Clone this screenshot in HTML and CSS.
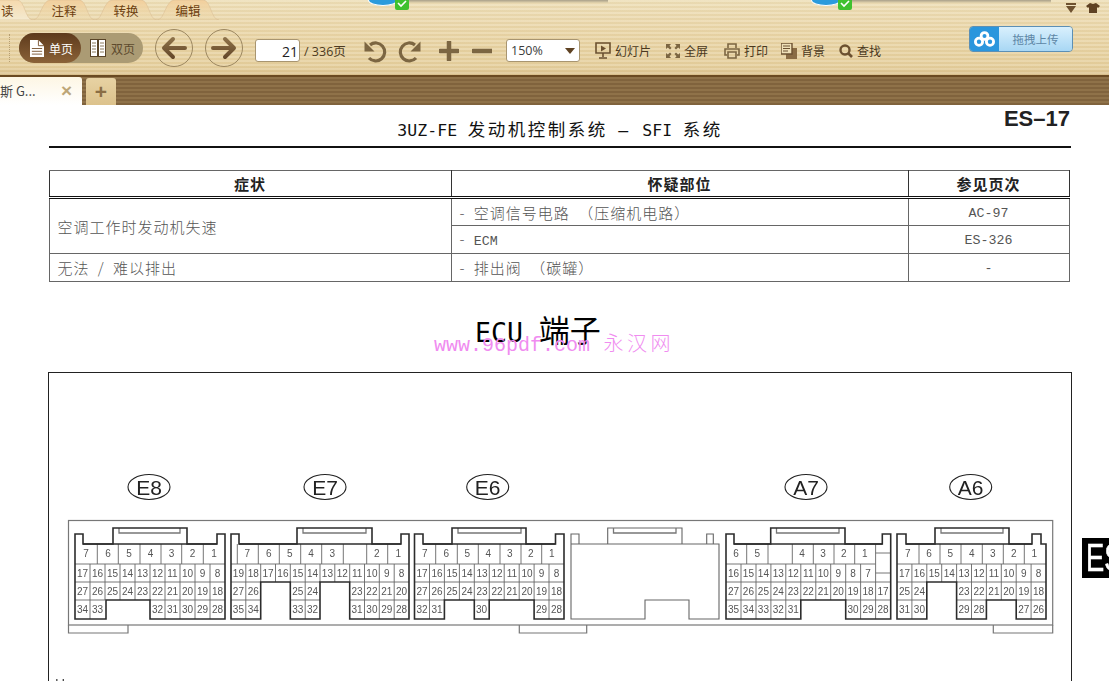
FILE: index.html
```html
<!DOCTYPE html>
<html lang="zh-CN">
<head>
<meta charset="utf-8">
<title>ES-17</title>
<link rel="stylesheet" href="styles.css">
</head>
<body>
<svg class="defs" width="0" height="0" aria-hidden="true">
  <defs>
    <linearGradient id="tabfill" x1="0" y1="0" x2="0" y2="1"><stop offset="0" stop-color="#f3cf9c"/><stop offset="1" stop-color="#ecd9ab" stop-opacity=".3"/></linearGradient>
    <linearGradient id="tabon" x1="0" y1="0" x2="0" y2="1"><stop offset="0" stop-color="#f5d9ad"/><stop offset="1" stop-color="#f4ead0"/></linearGradient>
    <linearGradient id="ico" x1="0" y1="0" x2="0" y2="1"><stop offset="0" stop-color="#8c7048"/><stop offset="1" stop-color="#66492a"/></linearGradient>
  </defs>
</svg>
<header class="toolbar">
  <div class="alerts">
    <div class="alert alert-a"><span class="cloud"></span><span class="check"><svg width="14" height="10" viewBox="0 0 14 10"><path d="M3 3l3 3 5-5" fill="none" stroke="#fff" stroke-width="1.6"/></svg></span><span class="shade"></span></div>
    <div class="alert alert-b"><span class="cloud"></span><span class="check"><svg width="14" height="10" viewBox="0 0 14 10"><path d="M3 3l3 3 5-5" fill="none" stroke="#fff" stroke-width="1.6"/></svg></span><span class="shade"></span></div>
  </div>
  <div class="skin">
    <svg width="14" height="12" viewBox="0 0 14 12"><path d="M2 1h10v2H2zM2 4h10L7 11z" fill="#6e5230"/></svg>
    <svg width="14" height="12" viewBox="0 0 14 12"><path d="M4 1l3 1 3-1 4 3-2 2-1-1v6H3V5L2 6 0 4z" fill="#5e4223"/></svg>
  </div>
  <nav class="menu">
    <div class="tab tab-first"><svg class="tab-bg" width="62" height="20" viewBox="0 0 62 20"><path d="M0 20C8 20 8 0 18 0H46C54 0 54 20 62 20Z" fill="url(#tabon)" stroke="#dcc096" stroke-width=".6"/></svg><span>读</span></div>
    <div class="tab"><svg class="tab-bg" width="62" height="20" viewBox="0 0 62 20"><path d="M0 20C8 20 8 0 18 0H46C54 0 54 20 62 20Z" fill="url(#tabfill)" stroke="#dcc096" stroke-width=".6"/></svg><span>注释</span></div>
    <div class="tab"><svg class="tab-bg" width="62" height="20" viewBox="0 0 62 20"><path d="M0 20C8 20 8 0 18 0H46C54 0 54 20 62 20Z" fill="url(#tabfill)" stroke="#dcc096" stroke-width=".6"/></svg><span>转换</span></div>
    <div class="tab"><svg class="tab-bg" width="62" height="20" viewBox="0 0 62 20"><path d="M0 20C8 20 8 0 18 0H46C54 0 54 20 62 20Z" fill="url(#tabfill)" stroke="#dcc096" stroke-width=".6"/></svg><span>编辑</span></div>
  </nav>
  <div class="tools">
    <span class="dots"></span>
    <div class="pill">
      <div class="pill-on">
        <svg width="14" height="17" viewBox="0 0 15 18"><path d="M0 0h9l6 6v12H0z" fill="#fff"/><path d="M9 0v6h6M2 9h11M2 12h11M2 15h11" fill="none" stroke="#7a5533" stroke-width="1"/></svg>
        <span>单页</span>
      </div>
      <div class="pill-off">
        <svg width="16" height="18" viewBox="0 0 16 18"><rect x=".5" y=".5" width="15" height="17" fill="#fff" stroke="#5a4528"/><path d="M8 0v18" stroke="#5a4528" stroke-width="2"/><path d="M2 4h4M2 7h4M2 10h4M2 13h4M10 4h4M10 7h4M10 10h4M10 13h4" stroke="#8a7a5c"/></svg>
        <span>双页</span>
      </div>
    </div>
    <button class="round" type="button" aria-label="上一页"><svg width="26" height="24" viewBox="0 0 26 24"><path d="M12 3L3 12l9 9M4 12h20" fill="none" stroke="url(#ico)" stroke-width="4" stroke-linecap="round" stroke-linejoin="round"/></svg></button>
    <button class="round round-next" type="button" aria-label="下一页"><svg width="26" height="24" viewBox="0 0 26 24"><path d="M14 3l9 9-9 9M22 12H2" fill="none" stroke="url(#ico)" stroke-width="4" stroke-linecap="round" stroke-linejoin="round"/></svg></button>
    <div class="pagebox low">21</div>
    <span class="pagecount low">/ 336页</span>
    <svg class="undo low" width="24" height="24" viewBox="0 0 24 24"><path d="M7 6A9 9 0 1 1 6 19" fill="none" stroke="#7c6642" stroke-width="3.2"/><path d="M1.500 2.500V12.500H11.500Z" fill="#7c6642"/></svg>
    <svg class="redo low" width="24" height="24" viewBox="0 0 24 24"><path d="M17 6A9 9 0 1 0 18 19" fill="none" stroke="#7c6642" stroke-width="3.2"/><path d="M22.500 2.500V12.500H12.500Z" fill="#7c6642"/></svg>
    <svg class="plus low" width="20" height="20" viewBox="0 0 20 20"><path d="M10 1v18M1 10h18" stroke="#7c6642" stroke-width="4.5" stroke-linecap="round"/></svg>
    <svg class="minus low" width="20" height="20" viewBox="0 0 20 20"><path d="M1 10h19" stroke="#7c6642" stroke-width="4.5" stroke-linecap="round"/></svg>
    <div class="zoombox low"><span>150%</span><svg width="10" height="6" viewBox="0 0 10 6"><path d="M0 0h10L5 6z" fill="#5e4223"/></svg></div>
    <div class="act act-show low"><svg width="16" height="18" viewBox="0 0 16 18"><path d="M1 1h14v10H1zM8 11v4M4 16h8" fill="none" stroke="#6b5030" stroke-width="1.6"/><path d="M6 3.500l5 3-5 3z" fill="#6b5030"/></svg><span>幻灯片</span></div>
    <div class="act act-full low"><svg width="14" height="14" viewBox="0 0 14 14"><path d="M0 0h5L3.500 1.800 5.500 4 4 5.500 1.800 3.500 0 5zM14 0v5L12.200 3.500 10 5.500 8.500 4 10.500 1.800 9 0zM0 14V9l1.800 1.500L4 8.500 5.500 10 3.500 12.200 5 14zM14 14H9l1.500-1.800L8.500 10 10 8.500l2.200 2L14 9z" fill="#7c6642"/></svg><span>全屏</span></div>
    <div class="act act-print low"><svg width="16" height="16" viewBox="0 0 16 16"><path d="M4 5V1h8v4M3 12H1V6h14v6h-2M4 9h8v6H4z" fill="none" stroke="#7c6642" stroke-width="1.600"/></svg><span>打印</span></div>
    <div class="act act-bg low"><svg width="16" height="16" viewBox="0 0 16 16"><path d="M5 5h11v11H5z" fill="#8a6c44"/><path d="M0 0h11v11H0z" fill="#efe0b8" stroke="#6b5030" stroke-width="1.400"/><path d="M2 3h7M2 5.500h7M2 8h5" stroke="#6b5030"/></svg><span>背景</span></div>
    <div class="act act-find low"><svg width="14" height="14" viewBox="0 0 14 14"><circle cx="6" cy="6" r="4.500" fill="none" stroke="#6b5030" stroke-width="2.400"/><path d="M9.500 9.500L13 13" stroke="#6b5030" stroke-width="2.600"/></svg><span>查找</span></div>
    <div class="upload">
      <span class="upload-ico"><svg width="21" height="16" viewBox="0 0 21 16"><g fill="none" stroke="#fff" stroke-width="2.800"><circle cx="10.500" cy="5" r="3.400"/><circle cx="5" cy="10.800" r="3.600"/><circle cx="16" cy="10.800" r="3.600"/></g></svg></span>
      <span class="upload-text">拖拽上传</span>
    </div>
  </div>
</header>
<div class="tabbar">
  <div class="doc-tab"><span class="doc-name">斯 G...</span><span class="doc-close">×</span></div>
  <div class="doc-add">+</div>
</div>
<main class="doc">
  <div class="title-row">
    <span></span>
    <h1 class="title"><span class="lat">3UZ-FE</span> 发动机控制系统 <span class="lat">— SFI</span> 系统</h1>
    <span class="pageno">ES–17</span>
  </div>
  <table class="symptoms">
    <colgroup><col class="c1"><col class="c2"><col class="c3"></colgroup>
    <thead><tr><th>症状</th><th>怀疑部位</th><th>参见页次</th></tr></thead>
    <tbody>
      <tr><td rowspan="2">空调工作时发动机失速</td><td>- 空调信号电路 （压缩机电路）</td><td class="ctr">AC-97</td></tr>
      <tr><td>- <span class="mono">ECM</span></td><td class="ctr">ES-326</td></tr>
      <tr><td>无法 / 难以排出</td><td>- 排出阀 （碳罐）</td><td class="ctr">-</td></tr>
    </tbody>
  </table>
  <div class="heading-wrap">
    <h2 class="heading"><span class="h-lat">ECU</span> 端子</h2>
    <div class="mark"><span class="m-lat">www.96pdf.com</span> <span class="m-cjk">永汉网</span></div>
  </div>
  <div class="frame">
    <svg class="diagram" width="1022" height="330" viewBox="49 373 1022 330">
      <rect class="body" x="68.500" y="520.500" width="984.200" height="104.500"/>
      <path class="body" d="M68.500 625V633H128V625M519.300 625V633H586.700V625M993.300 625V633H1052.700V625"/>

      <g class="label">
        <ellipse cx="149" cy="487" rx="21" ry="12.500"/><text x="149" y="494.500">E8</text>
        <ellipse cx="325" cy="487" rx="21" ry="12.500"/><text x="325" y="494.500">E7</text>
        <ellipse cx="487.700" cy="487" rx="21" ry="12.500"/><text x="487.700" y="494.500">E6</text>
        <ellipse cx="806" cy="487" rx="21" ry="12.500"/><text x="806" y="494.500">A7</text>
        <ellipse cx="970.700" cy="487" rx="21" ry="12.500"/><text x="970.700" y="494.500">A6</text>
      </g>

      <!-- E8 -->
      <path class="cell" d="M75 564H225M75 582H225M75 600H105M150 600H225M97.300 544V564M118.300 544V564M140 544V564M161 544V564M181.700 544V564M203.300 544V564M90 564V619M105 564V600M120 564V600M135 564V600M150 564V600M165 564V619M180 564V619M195 564V619M210 564V619"/>
      <path class="slot" d="M119 528V533H180V528"/>
      <path class="outline" d="M75 619V534H83V544H113V528H187V544H217V534H225V619H150V600H106V619Z"/>
      <path class="outline" d="M83 544H217"/>
      <g class="num">
        <text y="556.500"><tspan x="86">7</tspan><tspan x="108">6</tspan><tspan x="129">5</tspan><tspan x="150.500">4</tspan><tspan x="171.500">3</tspan><tspan x="192.500">2</tspan><tspan x="214">1</tspan></text>
        <text y="576.500"><tspan x="82.500">17</tspan><tspan x="97.500">16</tspan><tspan x="112.500">15</tspan><tspan x="127.500">14</tspan><tspan x="142.500">13</tspan><tspan x="157.500">12</tspan><tspan x="172.500">11</tspan><tspan x="187.500">10</tspan><tspan x="202.500">9</tspan><tspan x="217.500">8</tspan></text>
        <text y="594.500"><tspan x="82.500">27</tspan><tspan x="97.500">26</tspan><tspan x="112.500">25</tspan><tspan x="127.500">24</tspan><tspan x="142.500">23</tspan><tspan x="157.500">22</tspan><tspan x="172.500">21</tspan><tspan x="187.500">20</tspan><tspan x="202.500">19</tspan><tspan x="217.500">18</tspan></text>
        <text y="612.500"><tspan x="82.500">34</tspan><tspan x="97.500">33</tspan><tspan x="157.500">32</tspan><tspan x="172.500">31</tspan><tspan x="187.500">30</tspan><tspan x="202.500">29</tspan><tspan x="217.500">28</tspan></text>
      </g>

      <!-- E7 -->
      <path class="cell" d="M231 564H409M231 582H260.700M290.300 582H320M349.700 582H409M231 600H260.700M290.300 600H320M349.700 600H409M237.300 544V564M258.300 544V564M279.300 544V564M300.700 544V564M321.700 544V564M343.300 544V564M366.700 544V564M387.700 544V564M245.800 564V619M260.700 564V582M275.500 564V582M290.300 564V582M305.200 564V619M320 564V582M334.800 564V582M349.700 564V582M364.500 564V619M379.300 564V619M394.200 564V619"/>
      <path class="slot" d="M303 528V533H366V528"/>
      <path class="outline" d="M231 619V534H239V544H297V528H372V544H401V534H409V619H349.700V582H320V619H290.300V582H260.700V619Z"/>
      <path class="outline" d="M239 544H401"/>
      <g class="num">
        <text y="556.500"><tspan x="247.300">7</tspan><tspan x="268.700">6</tspan><tspan x="289.700">5</tspan><tspan x="311">4</tspan><tspan x="332.300">3</tspan><tspan x="376.700">2</tspan><tspan x="398.300">1</tspan></text>
        <text y="576.500"><tspan x="238.400">19</tspan><tspan x="253.200">18</tspan><tspan x="268.100">17</tspan><tspan x="282.900">16</tspan><tspan x="297.700">15</tspan><tspan x="312.600">14</tspan><tspan x="327.400">13</tspan><tspan x="342.200">12</tspan><tspan x="357.100">11</tspan><tspan x="371.900">10</tspan><tspan x="386.700">9</tspan><tspan x="401.600">8</tspan></text>
        <text y="594.500"><tspan x="238.400">27</tspan><tspan x="253.200">26</tspan><tspan x="297.700">25</tspan><tspan x="312.600">24</tspan><tspan x="357.100">23</tspan><tspan x="371.900">22</tspan><tspan x="386.700">21</tspan><tspan x="401.600">20</tspan></text>
        <text y="612.500"><tspan x="238.400">35</tspan><tspan x="253.200">34</tspan><tspan x="297.700">33</tspan><tspan x="312.600">32</tspan><tspan x="357.100">31</tspan><tspan x="371.900">30</tspan><tspan x="386.700">29</tspan><tspan x="401.600">28</tspan></text>
      </g>

      <!-- E6 -->
      <path class="cell" d="M414.500 564H564M414.500 582H564M414.500 600H444.400M474.300 600H489.200M534.100 600H564M435.700 544V564M457.300 544V564M478.300 544V564M500 544V564M521 544V564M541.700 544V564M429.500 564V619M444.400 564V600M459.400 564V600M474.300 564V600M489.300 564V600M504.200 564V600M519.200 564V600M534.100 564V600M549 564V619"/>
      <path class="slot" d="M458 528V533H521V528"/>
      <path class="outline" d="M414.500 619V534H423V544H452V528H526V544H555.500V534H564V619H534.100V600H489.200V619H474.300V600H444.400V619Z"/>
      <path class="outline" d="M423 544H555.500"/>
      <g class="num">
        <text y="556.500"><tspan x="424.700">7</tspan><tspan x="446.300">6</tspan><tspan x="467.300">5</tspan><tspan x="488.300">4</tspan><tspan x="509.700">3</tspan><tspan x="530.700">2</tspan><tspan x="551.700">1</tspan></text>
        <text y="576.500"><tspan x="422">17</tspan><tspan x="437">16</tspan><tspan x="452">15</tspan><tspan x="467">14</tspan><tspan x="482">13</tspan><tspan x="497">12</tspan><tspan x="512">11</tspan><tspan x="527">10</tspan><tspan x="541.500">9</tspan><tspan x="556.500">8</tspan></text>
        <text y="594.500"><tspan x="422">27</tspan><tspan x="437">26</tspan><tspan x="452">25</tspan><tspan x="467">24</tspan><tspan x="482">23</tspan><tspan x="497">22</tspan><tspan x="512">21</tspan><tspan x="527">20</tspan><tspan x="541.500">19</tspan><tspan x="556.500">18</tspan></text>
        <text y="612.500"><tspan x="422">32</tspan><tspan x="437">31</tspan><tspan x="481.500">30</tspan><tspan x="541.500">29</tspan><tspan x="556.500">28</tspan></text>
      </g>

      <!-- blank connector -->
      <path class="blank" d="M571 619V544H719V619H689V600H645V619ZM571 544V534H579V544M706.700 544V534H713.300V544M607.700 544V528H682V544"/>
      <path class="slot" d="M613.500 528V533H676V528"/>

      <!-- A7 -->
      <path class="cell" d="M726 564H875.600M726 582H890.700M726 600H800.800M845.700 600H890.700M746.700 544V564M768 544V564M792.300 544V564M813.300 544V564M834 544V564M854.700 544V564M875.600 544V619M875.600 553H890.700M875.600 573H890.700M741 564V619M756 564V619M770.900 564V619M785.800 564V619M800.800 564V600M815.800 564V600M830.700 564V600M845.700 564V600M860.600 564V619"/>
      <path class="slot" d="M776.500 528V533H839V528"/>
      <path class="outline" d="M726 619V534H734V544H770.700V528H845V544H882.300V534H890.700V619H845.700V600H800.800V619Z"/>
      <path class="outline" d="M734 544H882.300"/>
      <g class="num">
        <text y="556.500"><tspan x="736">6</tspan><tspan x="757.300">5</tspan><tspan x="802">4</tspan><tspan x="823">3</tspan><tspan x="843.700">2</tspan><tspan x="864.700">1</tspan></text>
        <text y="576.500"><tspan x="733.500">16</tspan><tspan x="748.400">15</tspan><tspan x="763.400">14</tspan><tspan x="778.300">13</tspan><tspan x="793.300">12</tspan><tspan x="808.300">11</tspan><tspan x="823.200">10</tspan><tspan x="838.200">9</tspan><tspan x="853.100">8</tspan><tspan x="868.100">7</tspan></text>
        <text y="594.500"><tspan x="733.500">27</tspan><tspan x="748.400">26</tspan><tspan x="763.400">25</tspan><tspan x="778.300">24</tspan><tspan x="793.300">23</tspan><tspan x="808.300">22</tspan><tspan x="823.200">21</tspan><tspan x="838.200">20</tspan><tspan x="853.100">19</tspan><tspan x="868.100">18</tspan><tspan x="883.100">17</tspan></text>
        <text y="612.500"><tspan x="733.500">35</tspan><tspan x="748.400">34</tspan><tspan x="763.400">33</tspan><tspan x="778.300">32</tspan><tspan x="793.300">31</tspan><tspan x="853.100">30</tspan><tspan x="868.100">29</tspan><tspan x="883.100">28</tspan></text>
      </g>

      <!-- A6 -->
      <path class="cell" d="M897 564H1046M897 582H926.800M956.600 582H1046M897 600H926.800M956.600 600H986.400M1016.200 600H1046M919 544V564M940 544V564M961 544V564M982.300 544V564M1003.300 544V564M1024.300 544V564M911.900 564V619M926.800 564V582M941.700 564V582M956.600 564V582M971.500 564V619M986.400 564V600M1001.300 564V600M1016.200 564V600M1031.100 564V619"/>
      <path class="slot" d="M941 528V533H1003V528"/>
      <path class="outline" d="M897 619V534H906V544H935V528H1009V544H1032V534H1041V544H1046V619H1016.200V600H986.400V619H956.600V582H926.800V619Z"/>
      <path class="outline" d="M906 544H1032"/>
      <g class="num">
        <text y="556.500"><tspan x="907.700">7</tspan><tspan x="929">6</tspan><tspan x="950.300">5</tspan><tspan x="971.700">4</tspan><tspan x="992.700">3</tspan><tspan x="1013.700">2</tspan><tspan x="1034.300">1</tspan></text>
        <text y="576.500"><tspan x="904.500">17</tspan><tspan x="919.400">16</tspan><tspan x="934.300">15</tspan><tspan x="949.200">14</tspan><tspan x="964.100">13</tspan><tspan x="979">12</tspan><tspan x="993.900">11</tspan><tspan x="1008.800">10</tspan><tspan x="1023.700">9</tspan><tspan x="1038.600">8</tspan></text>
        <text y="594.500"><tspan x="904.500">25</tspan><tspan x="919.400">24</tspan><tspan x="964.100">23</tspan><tspan x="979">22</tspan><tspan x="993.900">21</tspan><tspan x="1008.800">20</tspan><tspan x="1023.700">19</tspan><tspan x="1038.600">18</tspan></text>
        <text y="612.500"><tspan x="904.500">31</tspan><tspan x="919.400">30</tspan><tspan x="964.100">29</tspan><tspan x="979">28</tspan><tspan x="1023.700">27</tspan><tspan x="1038.600">26</tspan></text>
      </g>
      <text class="cut" x="55" y="689">H</text>
    </svg>
  </div>
  <div class="thumb"><span class="thumb-text">ES</span></div>
</main>
</body>
</html>
```
FILE: styles.css
```css
* { box-sizing: border-box; }
html, body { margin: 0; height: 681px; overflow: hidden; background: #fff; }
body { width: 1109px; font-family: "Liberation Sans", "Noto Sans CJK SC", sans-serif; position: relative; }
.defs { position: absolute; }

.toolbar {
  height: 75px; position: relative;
  background:
    repeating-linear-gradient(180deg, rgba(255,255,255,.14) 0 2px, rgba(120,80,20,.04) 2px 4px),
    linear-gradient(180deg, #eedfb8 0, #ead6a8 45%, #e6d09e 88%, #dcc390 100%);
  font-family: "Noto Sans CJK SC", sans-serif;
}
.alerts { position: absolute; inset: 0 0 auto 0; height: 10px; z-index: 1; }
.alert { position: absolute; top: 0; height: 10px; display: flex; }
.alert-a { left: 368px; width: 240px; }
.alert-b { left: 811px; width: 240px; }
.cloud { width: 30px; height: 6px; background: #2b9bdc; border-radius: 0 0 50% 50% / 0 0 100% 100%; border: 1px solid #fff; border-top: 0; }
.check { width: 14px; height: 10px; margin-left: -3px; background: #3fc12f; border-radius: 0 0 2px 2px; display: block; line-height: 0; }
.shade { flex: 1; height: 3px; background: linear-gradient(180deg, #a8a08a, #e6d6ae); }
.skin { position: absolute; left: 1064px; top: 2px; display: flex; gap: 8px; }

.menu { display: flex; height: 20px; overflow: hidden; }
.tab { width: 62px; height: 20px; position: relative; display: flex; align-items: center; justify-content: center; font-size: 12.500px; color: #6d3f10; }
.tab span { position: relative; }
.tab-bg { position: absolute; left: 0; top: 0; }
.tab-first { width: 33px; justify-content: flex-start; padding-left: 1px; }
.tab-first .tab-bg { left: -29px; }

.tools { display: flex; align-items: center; height: 55px; position: relative; font-size: 12.500px; color: #4d3b22; padding-top: 1px; }
.low { margin-top: 5px; }
.dots { width: 0; height: 28px; border-left: 1px dotted #b79f72; margin-left: 9px; }
.pill { margin-left: 9px; width: 124px; height: 30px; border-radius: 15px; background: #ab9b74; display: flex; align-items: center; }
.pill-on { width: 62px; height: 30px; border-radius: 15px; background: linear-gradient(180deg, #5d3a1c, #8a6238); color: #fff; display: flex; align-items: center; gap: 5px; padding-left: 11px; font-size: 12px; }
.pill-off { display: flex; align-items: center; gap: 5px; padding-left: 9px; font-size: 12px; color: #5d4a2d; }
.round { width: 38px; height: 38px; border-radius: 50%; border: 1.500px solid #9c8760; background: transparent; padding: 0; display: flex; align-items: center; justify-content: center; margin-left: 12px; }
.round-next { margin-left: 12px; }
.pagebox { margin-left: 12px; width: 45px; height: 23px; background: #fff; border: 1px solid #a89570; border-radius: 3px; text-align: right; padding-right: 1px; font-size: 14px; line-height: 24px; color: #222; font-family: "Open Sans", sans-serif; }
.pagecount { margin-left: 4px; width: 46px; white-space: nowrap; font-size: 12.500px; font-family: "Open Sans", "Noto Sans CJK SC", sans-serif; }
.undo { margin-left: 13px; }
.redo { margin-left: 11px; }
.plus { margin-left: 17px; }
.minus { margin-left: 13px; }
.zoombox { margin-left: 14px; width: 74px; height: 23px; background: #fff; border: 1px solid #a89570; border-radius: 3px; display: flex; align-items: center; justify-content: space-between; padding: 0 4px 0 4px; font-size: 12.500px; color: #3c3c3c; font-family: "Open Sans", sans-serif; }
.act { display: flex; align-items: center; white-space: nowrap; gap: 4px; font-size: 12px; color: #4a3820; }
.act-show { margin-left: 15px; }
.act-full { margin-left: 15px; }
.act-print { margin-left: 16px; }
.act-bg { margin-left: 13px; }
.act-find { margin-left: 14px; }
.upload { position: absolute; left: 969px; top: 6px; width: 104px; height: 26px; display: flex; border: 1px solid #5c8fb4; border-radius: 4px; overflow: hidden; }
.upload-ico { width: 29px; background: #2a96dd; display: flex; align-items: center; justify-content: center; }
.upload-text { flex: 1; background: linear-gradient(180deg, #d9f0fd, #a8d7f4); color: #5d86a5; font-size: 11.500px; text-align: center; line-height: 24px; }

.tabbar {
  height: 30px; display: flex; align-items: flex-end; gap: 4px;
  border-top: 2px solid #6a4a22;
  background: repeating-linear-gradient(180deg, #8f7249 0 2px, #80633d 2px 4px);
  font-family: "Noto Sans CJK SC", sans-serif;
}
.doc-tab { width: 82px; height: 28px; background: linear-gradient(180deg, #fdf6e4, #fff); display: flex; align-items: center; justify-content: space-between; padding: 0 10px 2px 0; border-radius: 0 3px 0 0; font-size: 13px; color: #444; }
.doc-close { font-size: 19px; font-family: "Liberation Sans", sans-serif; font-weight: 700; color: #bda677; line-height: 1; }
.doc-add { width: 30px; height: 27px; background: linear-gradient(180deg, #e7d2a3, #dcc28c); border-radius: 3px 3px 0 0; display: flex; align-items: center; justify-content: center; color: #8a6d44; font-size: 21px; font-weight: 700; font-family: "Liberation Sans", sans-serif; }

.doc { position: relative; height: 576px; font-family: "Noto Sans CJK SC", sans-serif; color: #111; }
.title-row { display: grid; grid-template-columns: 1fr auto 1fr; margin: 0 38px 0 49px; height: 43px; border-bottom: 2px solid #111; }
.title { margin: 0; padding-top: 11px; font-size: 17.500px; font-weight: 400; line-height: 26px; letter-spacing: 2.500px; word-spacing: 4px; white-space: nowrap; color: #111; }
.lat { font-family: "DejaVu Sans Mono", monospace; letter-spacing: .1px; font-size: 16.500px; }
.pageno { justify-self: end; font-family: "Liberation Sans", sans-serif; font-weight: 700; font-size: 22px; padding-top: 1px; margin-right: 1px; color: #222; }

.symptoms { margin: 22px 0 0 48.500px; width: 1020px; border-collapse: collapse; table-layout: fixed; font-size: 15px; letter-spacing: 1px; word-spacing: 4px; color: #555; font-weight: 300; }
.c1 { width: 402px; }
.c2 { width: 457px; }
.c3 { width: 161px; }
.symptoms th { height: 27px; border: 1px solid #333; border-top-color: #666; border-bottom: 3px double #111; color: #222; font-weight: 700; font-size: 15px; padding: 0; word-spacing: 0; }
.symptoms td { height: 28px; border: 1px solid #666; padding: 0 0 0 8px; line-height: 1; white-space: nowrap; }
.symptoms td.ctr { text-align: center; padding: 3px 0 0; font-family: "Liberation Mono", monospace; font-size: 13.300px; letter-spacing: 0; }
.mono { font-family: "Liberation Mono", monospace; font-size: 13.300px; letter-spacing: 0; }

.heading-wrap { position: relative; height: 90px; padding-top: 30px; }
.heading { margin: 0 0 0 475px; font-size: 31px; font-weight: 400; line-height: 34px; color: #000; white-space: nowrap; word-spacing: 9px; }
.h-lat { font-family: "DejaVu Sans Mono", monospace; font-size: 26.500px; }
.mark { position: absolute; left: 434px; top: 49px; font-size: 20px; line-height: 24px; color: #f08cf0; white-space: nowrap; }
.m-lat { font-family: "Liberation Mono", monospace; }
.m-cjk { letter-spacing: 3.500px; margin-left: 9px; font-weight: 300; }

.frame { margin-left: 48px; width: 1024px; height: 320px; border: 1px solid #222; }
.diagram { display: block; filter: blur(.3px); }
.body { fill: none; stroke: #777; stroke-width: 1.200; }
.outline { fill: none; stroke: #2c2c2c; stroke-width: 1.600; }
.cell { fill: none; stroke: #666; stroke-width: .9; }
.slot { fill: none; stroke: #777; stroke-width: 1.300; }
.blank { fill: none; stroke: #666; stroke-width: 1.100; }
.num text { font-family: "Liberation Sans", sans-serif; font-size: 10px; text-anchor: middle; fill: #555; }
.label ellipse { fill: none; stroke: #222; stroke-width: 1.100; }
.label text { font-family: "Liberation Sans", sans-serif; font-size: 21px; text-anchor: middle; fill: #222; }
.cut { font-family: "Liberation Sans", sans-serif; font-size: 14px; fill: #444; }
.thumb { position: absolute; left: 1082px; top: 433px; width: 27px; height: 40px; background: #000; overflow: hidden; white-space: nowrap; padding-left: 4px; }
.thumb-text { display: block; color: #fff; font-family: "Liberation Sans", sans-serif; font-size: 39px; line-height: 40px; transform: scaleX(.7); transform-origin: left center; -webkit-text-stroke: .6px #fff; }
```
